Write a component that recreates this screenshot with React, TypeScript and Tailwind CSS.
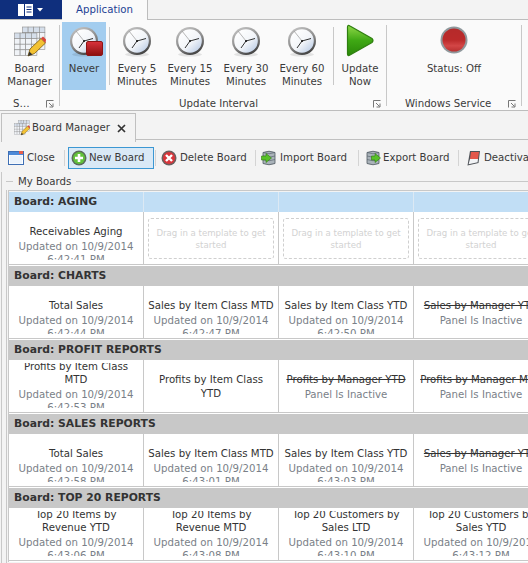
import React from "react";

const font = { fontFamily: '"DejaVu Sans", Verdana, sans-serif' };

function Clock({ id }: { id: string }) {
  return (
    <svg width="32" height="32" viewBox="0 0 32 32" className="shrink-0">
      <defs>
        <linearGradient id={id + "f"} x1="0.1" y1="0.1" x2="0.9" y2="0.95">
          <stop offset="0" stopColor="#ffffff" />
          <stop offset="0.55" stopColor="#f2f5f9" />
          <stop offset="1" stopColor="#bccde6" />
        </linearGradient>
        <linearGradient id={id + "r"} x1="0.2" y1="0" x2="0.7" y2="1">
          <stop offset="0" stopColor="#c4c4c4" />
          <stop offset="0.55" stopColor="#8a8a8a" />
          <stop offset="1" stopColor="#3c3c3c" />
        </linearGradient>
      </defs>
      <ellipse cx="16" cy="28.5" rx="12" ry="2" fill="#00000018" />
      <circle cx="16" cy="15" r="14" fill={`url(#${id}r)`} />
      <circle cx="16" cy="15" r="11.8" fill={`url(#${id}f)`} />
      <path d="M16 15 L8 5" stroke="#9a9a9a" strokeWidth="0.7" fill="none" />
      <path d="M16 15 L25 12.5 M16 15 L11 22" stroke="#1c1c1c" strokeWidth="0.9" fill="none" />
      <circle cx="16" cy="15" r="1" fill="#111" />
    </svg>
  );
}

function BoardIcon({ size = 32 }: { size?: number }) {
  const grid = (ox: number, oy: number, k: string) => {
    const cells = [];
    for (let r = 0; r < 4; r++)
      for (let c = 0; c < 4; c++)
        cells.push(
          <rect key={k + r + "-" + c} x={ox + c * 5.6} y={oy + r * 5.6} width="5.6" height="5.6" fill={r === 0 ? "#d5deea" : "#f0f3f7"} stroke="#8d8d8d" strokeWidth="0.6" />
        );
    return cells;
  };
  return (
    <svg width={size} height={size} viewBox="0 0 32 32" className="shrink-0">
      {grid(8.5, 1, "b")}
      {grid(0.5, 7, "f")}
      <path d="M14 30 L16 23 L27 12.5 L31.5 17 L20.5 27.5 Z" fill="#f3c233" stroke="#7a5a10" strokeWidth="0.8" />
      <path d="M27 12.5 L29 10.5 L32 13.5 L31.5 17 Z" fill="#d9453a" />
      <path d="M14 30 L15.3 25.5 L18.5 28.5 Z" fill="#333" />
    </svg>
  );
}

function Launcher() {
  return (
    <svg width="8" height="8" viewBox="0 0 8 8" className="shrink-0">
      <path d="M0.5 7.5 V0.5 H7.5 M3 3 L6.5 6.5 M7 3.5 V7 H3.5" stroke="#777" strokeWidth="1" fill="none" />
    </svg>
  );
}

function RibbonBtn({ w, icon, lines, active }: { w: string; icon: React.ReactNode; lines: string[]; active?: boolean }) {
  return (
    <div className={`${w} ${active ? "bg-[#a3cdef]" : ""} h-[68px] shrink-0 flex flex-col items-center`}>
      <div className="h-[38px] pt-[4px] flex justify-center shrink-0">{icon}</div>
      <div className="mt-[2px] text-center leading-[13px] whitespace-nowrap">
        {lines.map((l) => (
          <div key={l}>{l}</div>
        ))}
      </div>
    </div>
  );
}

function ToolSep({ ml, mr }: { ml: string; mr: string }) {
  return <div className={`w-px h-[16px] bg-[#d4d4d4] shrink-0 ${ml} ${mr}`} />;
}

function CloseIcon() {
  return (
    <svg width="16" height="16" viewBox="0 0 16 16" className="shrink-0">
      <rect x="0.5" y="1.5" width="15" height="13" fill="#fff" stroke="#3e6fb5" />
      <rect x="1" y="2" width="14" height="3" fill="#4d8ad8" />
      <rect x="11" y="1" width="4" height="3" fill="#e8604c" />
      <rect x="2" y="5.5" width="12" height="8" fill="#eaf2fb" />
    </svg>
  );
}
function NewIcon() {
  return (
    <svg width="16" height="16" viewBox="0 0 16 16" className="shrink-0">
      <circle cx="8" cy="8" r="7.5" fill="#5b6b5b" />
      <circle cx="8" cy="8" r="6" fill="#62c23a" />
      <path d="M8 4 V12 M4 8 H12" stroke="#fff" strokeWidth="2.6" />
    </svg>
  );
}
function DeleteIcon() {
  return (
    <svg width="16" height="16" viewBox="0 0 16 16" className="shrink-0">
      <circle cx="8" cy="8" r="7.5" fill="#6b5f5f" />
      <circle cx="8" cy="8" r="6" fill="#d9353a" />
      <path d="M5 5 L11 11 M11 5 L5 11" stroke="#fff" strokeWidth="2.4" />
    </svg>
  );
}
function DbIcon({ flip }: { flip?: boolean }) {
  return (
    <svg width="16" height="16" viewBox="0 0 16 16" className="shrink-0">
      <path d="M2 2.5 Q8 0 14 2.5 V13.5 Q8 16 2 13.5 Z" fill="#aab3ba" stroke="#4f5860" strokeWidth="0.8" />
      <path d="M2 2.5 Q8 5 14 2.5 M2 6 Q8 8.5 14 6 M2 9.5 Q8 12 14 9.5" fill="none" stroke="#5c6670" strokeWidth="0.7" />
      <path d={flip ? "M6.5 6 H10 V3.5 L15.5 8 L10 12.5 V10 H6.5 Z" : "M0.5 6 H5 V3.5 L10.5 8 L5 12.5 V10 H0.5 Z"} fill="#58c128" stroke="#2f7a10" strokeWidth="0.6" />
    </svg>
  );
}
function SwitchIcon() {
  return (
    <svg width="15" height="16" viewBox="0 0 15 16" className="shrink-0">
      <path d="M4 1 H14 L12.5 13 L1.5 15.5 Z" fill="#4f5358" />
      <path d="M5 2 H13 L12 9 H4 Z" fill="#e4584c" />
      <path d="M4 9 H12 L11.6 12.2 L2.6 14.3 Z" fill="#f2f4f6" />
    </svg>
  );
}

type CellT =
  | { kind: "drag" }
  | { kind: "panel"; title: string[]; subs: string[]; strike?: boolean; up?: boolean };

const upd = "Updated on 10/9/2014";
const p = (title: string | string[], time: string, up?: boolean): CellT => ({
  kind: "panel",
  title: Array.isArray(title) ? title : [title],
  subs: [upd, time],
  up,
});
const off = (title: string): CellT => ({ kind: "panel", title: [title], subs: ["Panel Is Inactive"], strike: true });
const drag: CellT = { kind: "drag" };

const rows: { name: string; blue?: boolean; cells: CellT[] }[] = [
  { name: "Board: AGING", blue: true, cells: [p("Receivables Aging", "6:42:41 PM"), drag, drag, drag] },
  { name: "Board: CHARTS", cells: [p("Total Sales", "6:42:44 PM"), p("Sales by Item Class MTD", "6:42:47 PM"), p("Sales by Item Class YTD", "6:42:50 PM"), off("Sales by Manager YTD")] },
  {
    name: "Board: PROFIT REPORTS",
    cells: [
      p(["Profits by Item Class", "MTD"], "6:42:53 PM", true),
      { kind: "panel", title: ["Profits by Item Class", "YTD"], subs: [] },
      off("Profits by Manager YTD"),
      off("Profits by Manager MTD"),
    ],
  },
  { name: "Board: SALES REPORTS", cells: [p("Total Sales", "6:42:58 PM"), p("Sales by Item Class MTD", "6:43:01 PM"), p("Sales by Item Class YTD", "6:43:03 PM"), off("Sales by Manager YTD")] },
  {
    name: "Board: TOP 20 REPORTS",
    cells: [
      p(["Top 20 Items by", "Revenue YTD"], "6:43:06 PM", true),
      p(["Top 20 Items by", "Revenue MTD"], "6:43:08 PM", true),
      p(["Top 20 Customers by", "Sales LTD"], "6:43:10 PM", true),
      p(["Top 20 Customers by", "Sales YTD"], "6:43:12 PM", true),
    ],
  },
];

function Cell({ c }: { c: CellT }) {
  if (c.kind === "drag") {
    return (
      <div className="w-[135px] shrink-0 border-r border-[#c8c8c8] h-[52px] px-[4px] pt-[6px]">
        <div className="h-[41px] border border-dashed border-[#cfcfcf] rounded-[3px] flex items-center justify-center text-center text-[#d2d2d2] text-[8.6px] leading-[12px] px-[2px]">
          Drag in a template to get started
        </div>
      </div>
    );
  }
  return (
    <div className="w-[135px] shrink-0 border-r border-[#c8c8c8] h-[52px] pt-[3px]">
      <div className="h-[45px] overflow-hidden flex flex-col items-center text-center">
        <div className={`${c.up ? "-mt-[3px]" : "mt-[10px]"} shrink-0 leading-[13px] whitespace-nowrap text-[#333] ${c.strike ? "line-through" : ""}`}>
          {c.title.map((t) => (
            <div key={t} className={c.subs.length === 0 && t === "YTD" ? "mt-px" : ""}>{t}</div>
          ))}
        </div>
        <div className="mt-[2px] shrink-0 leading-[13px] whitespace-nowrap text-[#7a7f88]">
          {c.subs.map((t) => (
            <div key={t}>{t}</div>
          ))}
        </div>
      </div>
    </div>
  );
}

export default function App() {
  return (
    <div className="w-[528px] h-[563px] overflow-hidden bg-[#f3f3f3] text-[10.2px] text-[#3a3a3a] flex flex-col" style={font}>
      {/* title tabs */}
      <div className="h-[20px] flex shrink-0 border-b border-[#bdbdbd] bg-[#f3f3f3]">
        <div className="w-[62px] h-[19px] bg-[#0f2f7d] flex items-center justify-center gap-[4px] pr-[2px]">
          <svg width="15" height="12" viewBox="0 0 15 12">
            <rect x="0" y="0" width="6" height="12" fill="#fff" />
            <rect x="7" y="0" width="8" height="12" fill="#fff" />
            <path d="M8.5 3 H13.5 M8.5 5.5 H13.5 M8.5 8 H13.5" stroke="#0f2f7d" strokeWidth="1" />
          </svg>
          <svg width="6" height="4" viewBox="0 0 6 4"><path d="M0 0 H6 L3 3.5 Z" fill="#fff" /></svg>
        </div>
        <div className="w-[86px] h-[20px] bg-[#fafafa] border-r border-[#bdbdbd] flex items-center justify-center text-[#1e3f94]">
          Application
        </div>
      </div>
      {/* ribbon */}
      <div className="h-[91px] shrink-0 bg-[#fafafa] border-b border-[#bdbdbd] flex pt-[5px]">
        <div className="w-[60px] shrink-0 border-r border-[#c8c8c8] flex flex-col h-[81px]">
          <div className="-mt-[3px]">
            <RibbonBtn w="w-[59px]" icon={<BoardIcon />} lines={["Board", "Manager"]} />
          </div>
          <div className="flex items-center justify-between mt-auto mb-[-4px] pl-[13px] pr-[5px] h-[13px]">
            <span>S…</span>
            <Launcher />
          </div>
        </div>
        <div className="w-[327px] shrink-0 border-r border-[#c8c8c8] h-[81px] flex flex-col">
          <div className="flex h-[68px] pl-[2px] -mt-[3px]">
            <RibbonBtn w="w-[44px]" active icon={
              <div className="relative w-[32px] h-[32px]">
                <Clock id="c0" />
                <div className="absolute right-[-3px] bottom-[2px] w-[17px] h-[15px] rounded-[2px] border border-[#8c1515] bg-gradient-to-b from-[#d8323a] to-[#8e1010]" />
              </div>
            } lines={["Never"]} />
            <div className="w-px h-[58px] mt-[5px] bg-[#c8c8c8] ml-[3px]" />
            <RibbonBtn w="w-[54px]" icon={<Clock id="c1" />} lines={["Every 5", "Minutes"]} />
            <RibbonBtn w="w-[52px]" icon={<Clock id="c2" />} lines={["Every 15", "Minutes"]} />
            <RibbonBtn w="w-[60px]" icon={<Clock id="c3" />} lines={["Every 30", "Minutes"]} />
            <RibbonBtn w="w-[52px]" icon={<Clock id="c4" />} lines={["Every 60", "Minutes"]} />
            <div className="w-px h-[58px] mt-[5px] bg-[#c8c8c8] ml-[5px]" />
            <RibbonBtn w="w-[52px]" icon={
              <svg width="28" height="33" viewBox="0 0 28 33" className="-mt-[2px]">
                <defs>
                  <linearGradient id="pl" x1="0" y1="0" x2="0" y2="1">
                    <stop offset="0" stopColor="#8fd848" />
                    <stop offset="0.5" stopColor="#3fa814" />
                    <stop offset="1" stopColor="#2a8808" />
                  </linearGradient>
                </defs>
                <path d="M1.5 3 Q1.5 0.5 4 2 L26 14.5 Q28 16.5 26 18.5 L4 31 Q1.5 32.5 1.5 30 Z" fill="url(#pl)" stroke="#2f7f10" strokeWidth="1.2" />
              </svg>
            } lines={["Update", "Now"]} />
          </div>
          <div className="mt-auto mb-[-4px] flex items-center h-[13px] pr-[5px]">
            <span className="ml-[119px] mr-auto">Update Interval</span>
            <Launcher />
          </div>
        </div>
        <div className="w-[135px] shrink-0 border-r border-[#c8c8c8] h-[81px] flex flex-col">
          <div className="-mt-[3px]">
            <RibbonBtn w="w-[134px]" icon={
              <svg width="28" height="28" viewBox="0 0 28 28" className="mt-[0px]">
                <defs>
                  <linearGradient id="rd" x1="0" y1="0" x2="0" y2="1">
                    <stop offset="0" stopColor="#b52a2a" />
                    <stop offset="0.5" stopColor="#bb2a2a" />
                    <stop offset="0.75" stopColor="#d34646" />
                    <stop offset="1" stopColor="#b83030" />
                  </linearGradient>
                </defs>
                <circle cx="14" cy="14" r="13.5" fill="#8f989c" />
                <circle cx="14" cy="14" r="11.5" fill="url(#rd)" />
              </svg>
            } lines={["Status: Off"]} />
          </div>
          <div className="mt-auto mb-[-4px] flex items-center justify-between h-[13px] pl-[18px] pr-[5px]">
            <span className="whitespace-nowrap">Windows Service</span>
            <Launcher />
          </div>
        </div>
      </div>
      {/* doc tab */}
      <div className="h-[29px] shrink-0 flex pt-[2px]">
        <div className="ml-px w-[135px] h-[29px] border border-b-0 border-[#c0c0c0] bg-[#f3f3f3] flex items-center pl-[12px] pr-[9px] relative z-10">
          <BoardIcon size={16} />
          <span className="ml-[2px] whitespace-nowrap">Board Manager</span>
          <svg width="9" height="9" viewBox="0 0 9 9" className="ml-auto">
            <path d="M1 1 L8 8 M8 1 L1 8" stroke="#333" strokeWidth="1.7" />
          </svg>
        </div>
        <div className="flex-1 border-b border-[#c0c0c0] h-[27px]" />
      </div>
      {/* toolbar */}
      <div className="h-[32px] shrink-0 flex items-center pl-[8px] pt-[4px] overflow-hidden">
        <CloseIcon />
        <span className="ml-[3px] w-[37px] shrink-0 whitespace-nowrap">Close</span>
        <ToolSep ml="ml-0" mr="mr-[3px]" />
        <div className="w-[86px] h-[22px] shrink-0 bg-[#d9e9f6] border border-[#3b97d3] flex items-center pl-[2px]">
          <NewIcon />
          <span className="ml-[2px] whitespace-nowrap">New Board</span>
        </div>
        <ToolSep ml="ml-[1px]" mr="mr-[5px]" />
        <DeleteIcon />
        <span className="ml-[3px] w-[75px] shrink-0 whitespace-nowrap">Delete Board</span>
        <ToolSep ml="ml-0" mr="mr-[5px]" />
        <DbIcon />
        <span className="ml-[3px] w-[78px] shrink-0 whitespace-nowrap">Import Board</span>
        <ToolSep ml="ml-0" mr="mr-[6px]" />
        <DbIcon flip />
        <span className="ml-[2px] w-[75px] shrink-0 whitespace-nowrap">Export Board</span>
        <ToolSep ml="ml-0" mr="mr-[7px]" />
        <SwitchIcon />
        <span className="ml-[3px] shrink-0 whitespace-nowrap">Deactivate</span>
      </div>
      {/* group box */}
      <div className="flex-1 min-h-0 ml-px border-l border-[#c8c8c8] pl-[4px] flex flex-col">
        <div className="h-[18px] shrink-0 flex items-center pt-[1px]">
          <div className="w-[7px] h-px bg-[#c8c8c8]" />
          <span className="mx-[5px] whitespace-nowrap">My Boards</span>
          <div className="flex-1 h-px bg-[#c8c8c8]" />
        </div>
        <div className="flex-1 min-h-0 border-l border-[#c8c8c8] pl-[1px]">
          <div className="border-l border-t border-[#c8c8c8] pt-px w-[560px]">
            {rows.map((r) => (
              <div key={r.name} className="h-[74px]">
                <div className={`h-[20px] flex items-center ${r.blue ? "bg-[#c1def5]" : "bg-[#c8c8c8]"} relative`}>
                  <span className="pl-[5px] font-bold text-[10.8px] whitespace-nowrap text-[#333]">{r.name}</span>
                  {r.blue && (
                    <>
                      <div className="absolute left-[134px] top-0 bottom-0 w-px bg-[#dce9f4]" />
                      <div className="absolute left-[269px] top-0 bottom-0 w-px bg-[#dce9f4]" />
                      <div className="absolute left-[404px] top-0 bottom-0 w-px bg-[#dce9f4]" />
                    </>
                  )}
                </div>
                <div className="flex bg-white h-[53px] border-b border-[#c8c8c8]">
                  {r.cells.map((c, i) => (
                    <Cell key={i} c={c} />
                  ))}
                </div>
                <div className="h-px bg-white" />
              </div>
            ))}
          </div>
        </div>
      </div>
    </div>
  );
}
